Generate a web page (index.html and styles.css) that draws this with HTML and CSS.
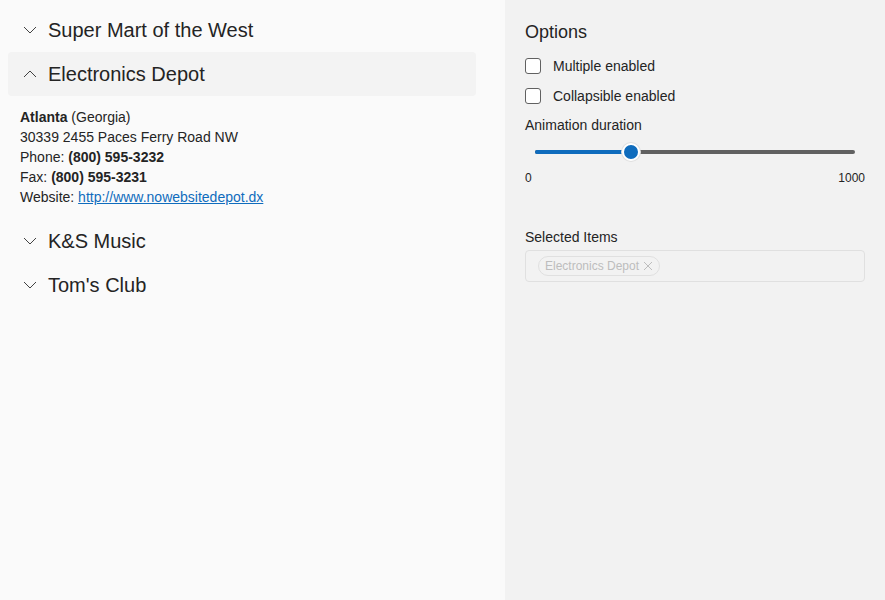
FILE: index.html
```html
<!DOCTYPE html>
<html>
<head>
<meta charset="utf-8">
<link rel="stylesheet" href="styles.css">
</head>
<body>
<div class="page">
  <div class="left">
    <div class="accordion">
      <div class="item">
        <div class="header">
          <svg class="chev" viewBox="0 0 16 16"><polyline points="2,5 8,11 14,5"/></svg>
          <span class="title">Super Mart of the West</span>
        </div>
      </div>
      <div class="item open">
        <div class="header">
          <svg class="chev" viewBox="0 0 16 16"><polyline points="2,11 8,5 14,11"/></svg>
          <span class="title">Electronics Depot</span>
        </div>
        <div class="body">
          <div><b>Atlanta</b> (Georgia)</div>
          <div>30339 2455 Paces Ferry Road NW</div>
          <div>Phone: <b>(800) 595-3232</b></div>
          <div>Fax: <b>(800) 595-3231</b></div>
          <div>Website: <a href="#" class="link">http://www.nowebsitedepot.dx</a></div>
        </div>
      </div>
      <div class="item">
        <div class="header">
          <svg class="chev" viewBox="0 0 16 16"><polyline points="2,5 8,11 14,5"/></svg>
          <span class="title">K&amp;S Music</span>
        </div>
      </div>
      <div class="item">
        <div class="header">
          <svg class="chev" viewBox="0 0 16 16"><polyline points="2,5 8,11 14,5"/></svg>
          <span class="title">Tom's Club</span>
        </div>
      </div>
    </div>
  </div>
  <div class="right">
    <div class="opt-title">Options</div>
    <div class="check-row first"><span class="box"></span><span>Multiple enabled</span></div>
    <div class="check-row"><span class="box"></span><span>Collapsible enabled</span></div>
    <div class="label anim">Animation duration</div>
    <div class="slider">
      <div class="track">
        <div class="fill" style="width:30%"></div>
        <div class="thumb" style="left:30%"></div>
      </div>
    </div>
    <div class="range"><span>0</span><span>1000</span></div>
    <div class="label sel">Selected Items</div>
    <div class="tagbox">
      <span class="chip">Electronics Depot <svg class="x" viewBox="0 0 10 10"><path d="M1 1 L9 9 M9 1 L1 9"/></svg></span>
    </div>
  </div>
</div>
</body>
</html>
```
FILE: styles.css
```css
* { box-sizing: border-box; }
html, body { margin: 0; padding: 0; }
body {
  font-family: "Liberation Sans", Arial, sans-serif;
  color: #242424;
  font-size: 14px;
}
.page {
  display: flex;
  height: 600px;
}
.left {
  width: 505px;
  background: #fafafa;
  padding: 8px 29px 8px 8px;
}
.accordion { width: 468px; }
.header {
  height: 44px;
  display: flex;
  align-items: center;
  padding-left: 14px;
  gap: 10px;
  border-radius: 4px;
}
.item.open .header { background: #f3f3f3; }
.chev {
  width: 16px;
  height: 16px;
  fill: none;
  stroke: #424242;
  stroke-width: 1;
}
.title {
  font-size: 20px;
  line-height: 24px;
}
.body {
  padding: 11px 12px 12px 12px;
  line-height: 20px;
  font-size: 14px;
}
.link { color: #0f6cbd; text-decoration: underline; }
.right {
  flex: 1;
  background: #f2f2f2;
  padding: 20px;
}
.opt-title {
  font-size: 18px;
  line-height: 24px;
}
.check-row {
  display: flex;
  align-items: center;
  gap: 12px;
  height: 24px;
  margin-top: 6px;
  line-height: 20px;
}
.check-row.first { margin-top: 10px; }
.box {
  width: 16px;
  height: 16px;
  border: 1px solid #616161;
  border-radius: 3px;
  background: #fff;
}
.label { line-height: 20px; }
.anim { margin-top: 7px; }
.slider {
  margin-top: 8px;
  height: 18px;
  padding: 0 10px;
  display: flex;
  align-items: center;
}
.track {
  position: relative;
  width: 100%;
  height: 4px;
  border-radius: 2px;
  background: #616161;
}
.fill {
  height: 4px;
  border-radius: 2px;
  background: #0f6cbd;
}
.thumb {
  position: absolute;
  top: 50%;
  width: 18px;
  height: 18px;
  margin: -9px 0 0 -9px;
  border-radius: 50%;
  background: #0f6cbd;
  border: 2px solid #fff;
  box-shadow: 0 0 0 1px #e0e0e0;
}
.range {
  margin-top: 9px;
  display: flex;
  justify-content: space-between;
  font-size: 12px;
  line-height: 16px;
}
.sel { margin-top: 41px; }
.tagbox {
  margin-top: 3px;
  height: 32px;
  border: 1px solid #e0e0e0;
  border-radius: 4px;
  padding: 5px 12px;
  display: flex;
  align-items: center;
}
.chip {
  display: inline-flex;
  align-items: center;
  gap: 4px;
  height: 20px;
  padding: 0 6px;
  border: 1px solid #e0e0e0;
  border-radius: 10px;
  font-size: 12px;
  color: #bdbdbd;
}
.x {
  width: 10px;
  height: 10px;
  fill: none;
  stroke: #bdbdbd;
  stroke-width: 1;
}
```
